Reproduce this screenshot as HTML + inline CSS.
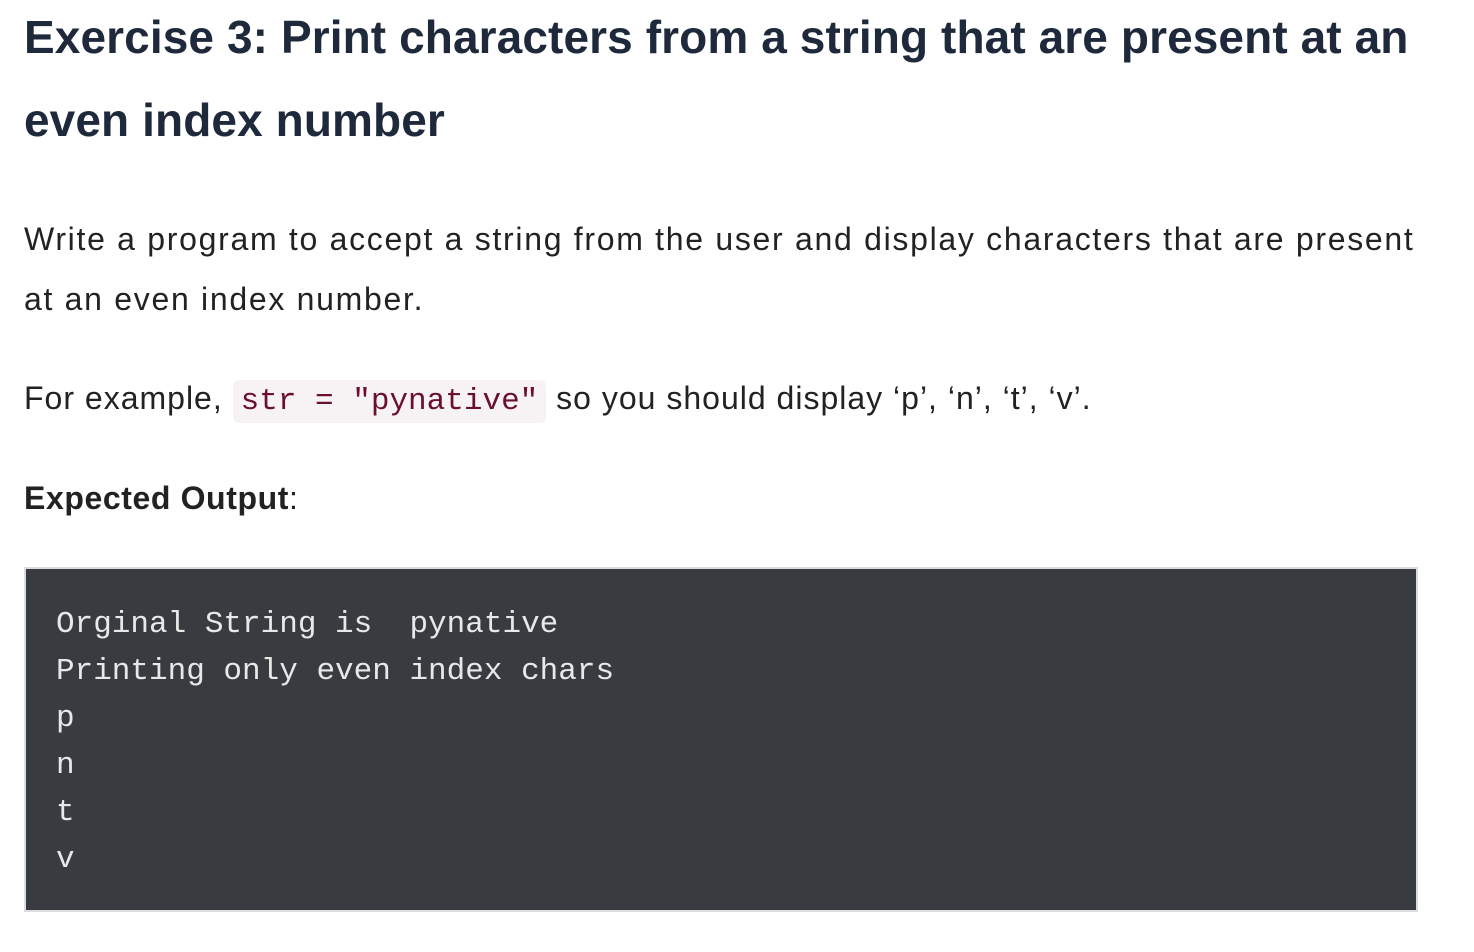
<!DOCTYPE html>
<html><head><style>
body{margin:0;background:#fff;width:1474px;height:952px;overflow:hidden;font-family:"Liberation Sans",sans-serif;}
h1{position:absolute;left:24px;top:-4px;margin:0;font-size:46px;font-weight:bold;color:#1e293b;line-height:83px;white-space:nowrap;letter-spacing:0.1px;}
.p{position:absolute;left:24px;margin:0;font-size:32px;color:#222;line-height:60px;white-space:nowrap;letter-spacing:1.7px;}
code{font-family:"Liberation Mono",monospace;font-size:31px;color:#6a0f2c;background:#f7f2f3;border-radius:6px;padding:4px 8px;letter-spacing:0;}
.pre{position:absolute;left:24px;top:567px;width:1390px;height:341px;background:#383b40;border:2px solid #dcdcdc;}
.pre div{position:absolute;left:30px;top:32px;font-family:"Liberation Mono",monospace;font-size:31px;line-height:47px;color:#e8e8e8;white-space:pre;}
</style></head><body>
<h1>Exercise 3: Print characters from a string that are present at an<br>even index number</h1>
<p class="p" style="top:209px">Write a program to accept a string from the user and display characters that are present<br>at an even index number.</p>
<p class="p" style="top:368px;letter-spacing:1.0px">For example, <code>str = "pynative"</code> so you should display ‘p’, ‘n’, ‘t’, ‘v’.</p>
<p class="p" style="top:468px;letter-spacing:0.6px"><b>Expected Output</b>:</p>
<div class="pre"><div>Orginal String is  pynative
Printing only even index chars
p
n
t
v</div></div>
</body></html>
